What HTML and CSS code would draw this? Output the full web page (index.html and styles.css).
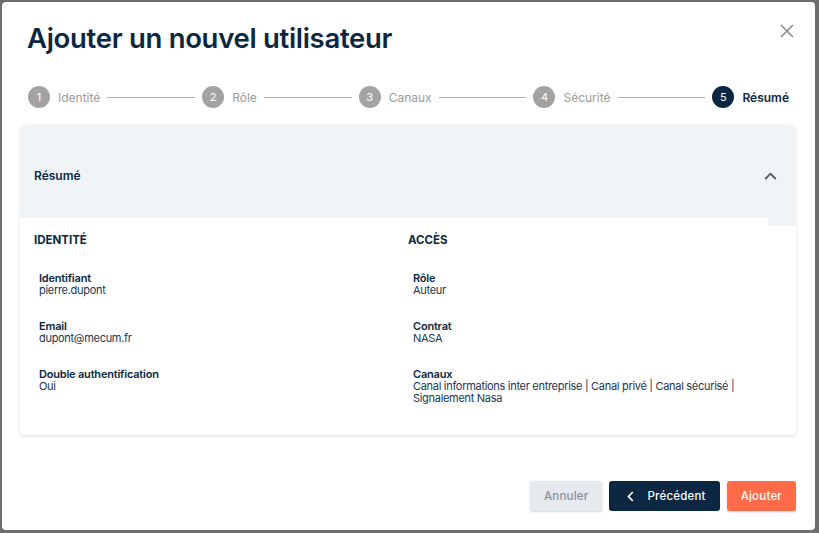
FILE: index.html
```html
<!DOCTYPE html>
<html lang="fr">

<head>
  <meta charset="utf-8">
  <link rel="stylesheet" href="styles.css">
</head>

<body>
  <div class="modal">
    <div class="modal-header">
      <h1 class="modal-title">Ajouter un nouvel utilisateur</h1>
      <button class="close">
        <svg width="14" height="14" viewBox="0 0 14 14">
          <path d="M1 1 L13 13 M13 1 L1 13" stroke="#8c8c8c" stroke-width="1.6" fill="none" />
        </svg>
      </button>
    </div>

    <ol class="stepper">
      <li class="step"><span class="step-num">1</span><span class="step-label">Identité</span></li>
      <li class="step-line"></li>
      <li class="step"><span class="step-num">2</span><span class="step-label">Rôle</span></li>
      <li class="step-line"></li>
      <li class="step"><span class="step-num">3</span><span class="step-label">Canaux</span></li>
      <li class="step-line"></li>
      <li class="step"><span class="step-num">4</span><span class="step-label">Sécurité</span></li>
      <li class="step-line"></li>
      <li class="step active"><span class="step-num">5</span><span class="step-label">Résumé</span></li>
    </ol>

    <div class="card">
      <div class="card-header">
        <span>Résumé</span>
        <svg width="13" height="8" viewBox="0 0 13 8">
          <path d="M1.2 7 L6.5 1.7 L11.8 7" stroke="#555" stroke-width="1.8" fill="none" />
        </svg>
      </div>

      <div class="card-body">
        <div class="col">
          <h2 class="col-title">Identité</h2>
          <dl class="fields">
            <div class="field">
              <dt>Identifiant</dt>
              <dd>pierre.dupont</dd>
            </div>
            <div class="field">
              <dt>Email</dt>
              <dd>dupont@mecum.fr</dd>
            </div>
            <div class="field">
              <dt>Double authentification</dt>
              <dd>Oui</dd>
            </div>
          </dl>
        </div>

        <div class="col">
          <h2 class="col-title">Accès</h2>
          <dl class="fields">
            <div class="field">
              <dt>Rôle</dt>
              <dd>Auteur</dd>
            </div>
            <div class="field">
              <dt>Contrat</dt>
              <dd>NASA</dd>
            </div>
            <div class="field">
              <dt>Canaux</dt>
              <dd>Canal informations inter entreprise | Canal privé | Canal sécurisé | Signalement Nasa</dd>
            </div>
          </dl>
        </div>
      </div>
    </div>

    <div class="modal-footer">
      <button class="btn btn-cancel">Annuler</button>
      <button class="btn btn-prev">
        <svg width="7" height="11" viewBox="0 0 7 11">
          <path d="M5.8 1 L1.5 5.5 L5.8 10" stroke="#fff" stroke-width="1.8" fill="none" />
        </svg>
        Précédent
      </button>
      <button class="btn btn-add">Ajouter</button>
    </div>
  </div>
</body>

</html>
```

FILE: styles.css
```css
* {
  box-sizing: border-box;
}

body {
  margin: 0;
  background: #6e6e6e;
  font-family: Inter, "Noto Sans", sans-serif;
  color: #0c2741;
}

.modal {
  display: flex;
  flex-direction: column;
  width: 813px;
  height: 528px;
  margin: 2px;
  padding: 18px 19px 19px 18px;
  background: #fff;
  border-radius: 4px;
}

.modal-header {
  display: flex;
  justify-content: space-between;
  align-items: flex-start;
  padding-left: 7px;
}

.modal-title {
  margin: 0;
  font-size: 27.5px;
  line-height: 36px;
  font-weight: 600;
  letter-spacing: -0.3px;
  color: #0c2741;
}

.close {
  padding: 0;
  margin: 4px 2px 0 0;
  border: 0;
  background: none;
  cursor: pointer;
}

.close svg {
  display: block;
}

/* stepper */

.stepper {
  display: flex;
  align-items: center;
  list-style: none;
  margin: 30px 0 0;
  padding: 0 7px 0 8px;
}

.step {
  display: flex;
  align-items: center;
  gap: 8px;
}

.step-num {
  display: flex;
  align-items: center;
  justify-content: center;
  width: 22px;
  height: 22px;
  border-radius: 50%;
  background: #a3a3a3;
  color: #fff;
  font-size: 11px;
}

.step-label {
  font-size: 12px;
  color: #9c9c9c;
}

.step.active .step-num {
  background: #0c2741;
}

.step.active .step-label {
  color: #0c2741;
  font-weight: 600;
}

.step-line {
  flex: 1;
  height: 1px;
  margin: 0 7px;
  background: #b0b0b0;
}

/* card */

.card {
  margin-top: 17px;
  border-radius: 4px;
  background: #fff;
  box-shadow: 0 1px 3px rgba(0, 0, 0, 0.14);
  overflow: hidden;
}

.card-header {
  display: flex;
  justify-content: space-between;
  align-items: center;
  height: 93px;
  padding: 8px 19px 0 14px;
  background: #f0f4f7;
  font-size: 12px;
  font-weight: 600;
}

.card-body {
  display: grid;
  grid-template-columns: 1fr 1fr;
  padding: 15px 14px 31px;
  /* petit reste gris en haut à droite */
  background: linear-gradient(#f0f4f7, #f0f4f7) no-repeat right top / 28px 8px, #fff;
}

.col-title {
  margin: 0;
  font-size: 11.5px;
  line-height: 14px;
  font-weight: 700;
  text-transform: uppercase;
}

.fields {
  display: flex;
  flex-direction: column;
  gap: 24px;
  margin: 25px 0 0;
  padding-left: 5px;
}

.field dt {
  font-size: 11px;
  line-height: 12px;
  font-weight: 600;
  letter-spacing: -0.2px;
}

.field dd {
  margin: 0;
  font-size: 11px;
  line-height: 12px;
  letter-spacing: -0.3px;
  color: #1d3550;
}

/* footer */

.modal-footer {
  display: flex;
  justify-content: flex-end;
  gap: 7px;
  margin-top: auto;
}

.btn {
  display: flex;
  align-items: center;
  height: 30px;
  padding: 0 13px;
  border: 0;
  border-radius: 3px;
  font-family: Inter, "Noto Sans", sans-serif;
  font-size: 11.5px;
  font-weight: 500;
  letter-spacing: 0.2px;
  cursor: pointer;
}

.btn-cancel {
  padding: 0 14px;
  background: #e6e9ed;
  color: #8a8f9e;
  box-shadow: 0 1px 2px rgba(0, 0, 0, 0.18);
}

.btn-prev {
  gap: 13px;
  padding: 0 14px 0 18px;
  background: #0c2741;
  color: #fff;
}

.btn-add {
  padding: 0 14px;
  background: #ff6a49;
  color: #fff;
  box-shadow: 0 1px 2px rgba(0, 0, 0, 0.15);
}
```
